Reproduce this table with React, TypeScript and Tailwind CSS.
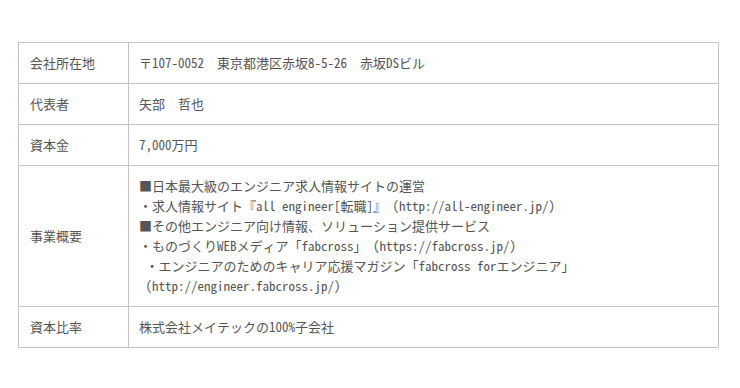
import React from "react";

const rows: { label: string; lines: string[] }[] = [
  { label: "会社所在地", lines: ["〒107-0052　東京都港区赤坂8-5-26　赤坂DSビル"] },
  { label: "代表者", lines: ["矢部　哲也"] },
  { label: "資本金", lines: ["7,000万円"] },
  {
    label: "事業概要",
    lines: [
      "■日本最大級のエンジニア求人情報サイトの運営",
      "・求人情報サイト『all engineer[転職]』　(http://all-engineer.jp/)",
      "■その他エンジニア向け情報、ソリューション提供サービス",
      "・ものづくりWEBメディア「fabcross」 (https://fabcross.jp/)",
      " ・エンジニアのためのキャリア応援マガジン「fabcross forエンジニア」",
      " (http://engineer.fabcross.jp/)",
    ],
  },
  { label: "資本比率", lines: ["株式会社メイテックの100%子会社"] },
];

export default function App() {
  return (
    <div
      className="w-[740px] h-[388px] bg-white pt-[42px] pl-[18px]"
      style={{ fontFamily: '"Noto Sans Mono CJK JP", "Noto Sans CJK JP", monospace' }}
    >
      <table className="w-[701px] border-collapse text-[13px] leading-[20px] text-[#555]">
        <tbody>
          {rows.map((r) => (
            <tr key={r.label}>
              <td className="w-[110px] border border-[#c4c4c4] pl-[11px] py-[10px] align-middle">
                {r.label}
              </td>
              <td className="border border-[#c4c4c4] pl-[10px] py-[10px] whitespace-pre">
                {r.lines.map((l, i) => (
                  <div key={i}>{l}</div>
                ))}
              </td>
            </tr>
          ))}
        </tbody>
      </table>
    </div>
  );
}
